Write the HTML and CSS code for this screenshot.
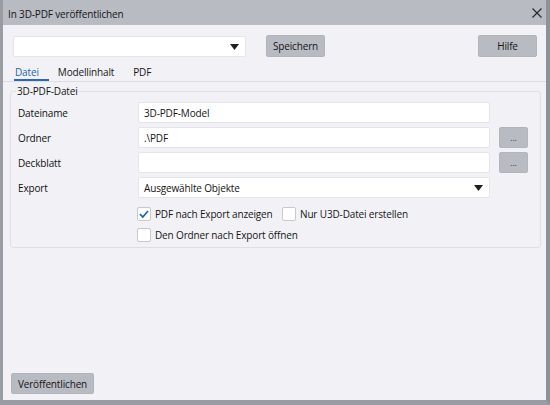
FILE: index.html
```html
<!DOCTYPE html>
<html>
<head>
<meta charset="utf-8">
<link rel="stylesheet" href="styles.css">
</head>
<body>
<div class="window">
  <div class="titlebar">
    <span class="title">In 3D-PDF veröffentlichen</span>
    <svg class="close" width="10" height="10" viewBox="0 0 10 10"><path d="M0.5 0.5L9.5 9.5M9.5 0.5L0.5 9.5" stroke="#2a2a2a" stroke-width="1.2" fill="none"/></svg>
  </div>
  <div class="body">
    <div class="toprow">
      <div class="combo"><svg class="arrow" width="9" height="6" viewBox="0 0 9 6"><path d="M0 0H9L4.5 6Z" fill="#1e1e1e"/></svg></div>
      <button class="btn save">Speichern</button>
      <div class="spacer"></div>
      <button class="btn help">Hilfe</button>
    </div>
    <div class="tabs">
      <div class="tab active">Datei</div>
      <div class="tab">Modellinhalt</div>
      <div class="tab">PDF</div>
    </div>
    <div class="group">
      <div class="legend">3D-PDF-Datei</div>
      <div class="grid">
        <div class="label">Dateiname</div>
        <div class="input">3D-PDF-Model</div>
        <div></div>
        <div class="label">Ordner</div>
        <div class="input">.\PDF</div>
        <button class="btn dots">...</button>
        <div class="label">Deckblatt</div>
        <div class="input"></div>
        <button class="btn dots">...</button>
        <div class="label">Export</div>
        <div class="input select">Ausgewählte Objekte<svg class="arrow" width="9" height="6" viewBox="0 0 9 6"><path d="M0 0H9L4.5 6Z" fill="#1e1e1e"/></svg></div>
        <div></div>
      </div>
      <div class="checks">
        <div class="checkrow">
          <label class="check w1"><span class="box"><svg width="10" height="8" viewBox="0 0 10 8"><path d="M1 4.2L3.8 7L9 1" stroke="#1f5fae" stroke-width="1.7" fill="none"/></svg></span>PDF nach Export anzeigen</label>
          <label class="check"><span class="box"></span>Nur U3D-Datei erstellen</label>
        </div>
        <div class="checkrow">
          <label class="check"><span class="box"></span>Den Ordner nach Export öffnen</label>
        </div>
      </div>
    </div>
    <div class="fill"></div>
    <div class="bottom">
      <button class="btn publish">Veröffentlichen</button>
    </div>
  </div>
</div>
</body>
</html>
```
FILE: styles.css
```css
* { box-sizing: border-box; }
html, body { margin: 0; padding: 0; }
body {
  width: 550px; height: 405px; overflow: hidden;
  font-family: "Open Sans", "Noto Sans", sans-serif;
  font-size: 10px; letter-spacing: -0.15px; color: #141414;
  background: #8f9198;
}
.window {
  width: 550px; height: 405px;
  display: flex; flex-direction: column;
  border-left: 3px solid #9a9ca3;
  border-right: 4px solid #8f9198;
  border-bottom: 5px solid #9a9ca3;
  background: #f2f2f6;
}
.titlebar {
  height: 25px; flex: none;
  background: #b9bbc3;
  display: flex; align-items: center;
  padding: 2px 4px 0 5px;
  justify-content: space-between;
}
.title { color: #141414; }
.close { margin-top: -2px; }
.body { flex: 1; display: flex; flex-direction: column; background: #f2f2f6; }
.toprow {
  display: flex; align-items: flex-start;
  padding: 10px 9px 0 10px; height: 32px; flex: none;
}
.combo {
  margin-top: 1px;
  width: 233px; height: 21px;
  background: #fff; border: 1px solid #e4e4ea; border-radius: 2px;
  display: flex; align-items: center; justify-content: flex-end;
  padding-right: 6px;
}
.btn {
  font-family: inherit; font-size: 10px; letter-spacing: -0.15px; color: #141414;
  background: #b9bbc3; border: 1px solid #b3b5bd; border-radius: 2px;
  padding: 0; cursor: default;
}
.save { margin-left: 20px; width: 59px; height: 22px; }
.spacer { flex: 1; }
.help { width: 59px; height: 22px; }
.tabs {
  display: flex; margin-top: 9px; padding-left: 11px; flex: none;
  border-bottom: 1px solid #dcdce2; height: 16px;
}
.tab { padding: 0 10px 0 1px; margin-right: 8px; line-height: 13px; height: 15px; color: #141414; }
.tab.active { color: #1f5fae; border-bottom: 2px solid #2a6ab5; }
.group {
  position: relative; flex: none;
  margin: 9px 5px 0 7px;
  border: 1px solid #dfdfe5; border-radius: 3px;
  height: 157px;
  padding: 10px 0 0 7px;
}
.legend {
  position: absolute; top: -8px; left: 5px;
  background: #f2f2f6; padding: 0 1px; line-height: 14px;
}
.grid {
  display: grid;
  grid-template-columns: 120px 352px 38px;
  grid-auto-rows: 21px;
  row-gap: 4px;
}
.label { display: flex; align-items: center; color: #101010; }
.input {
  background: #fff; border: 1px solid #e4e4ea; border-radius: 2px;
  display: flex; align-items: center; padding-left: 5px;
}
.select { justify-content: space-between; padding-right: 6px; }
.dots {
  margin-left: 9px; width: 29px; height: 21px;
  font-size: 9px; color: #444; line-height: 10px;
}
.checks { margin-left: 119px; margin-top: 9px; display: flex; flex-direction: column; gap: 7px; }
.checkrow { display: flex; white-space: nowrap; }
.check { display: flex; align-items: center; height: 14px; }
.w1 { width: 145px; }
.box {
  width: 14px; height: 14px; background: #fff; flex: none;
  border: 1px solid #c8c8d0; border-radius: 2px;
  margin-right: 4px; display: flex; align-items: center; justify-content: center;
}
.fill { flex: 1; }
.bottom { padding: 0 0 6px 8px; flex: none; }
.publish { width: 83px; height: 21px; }
```
